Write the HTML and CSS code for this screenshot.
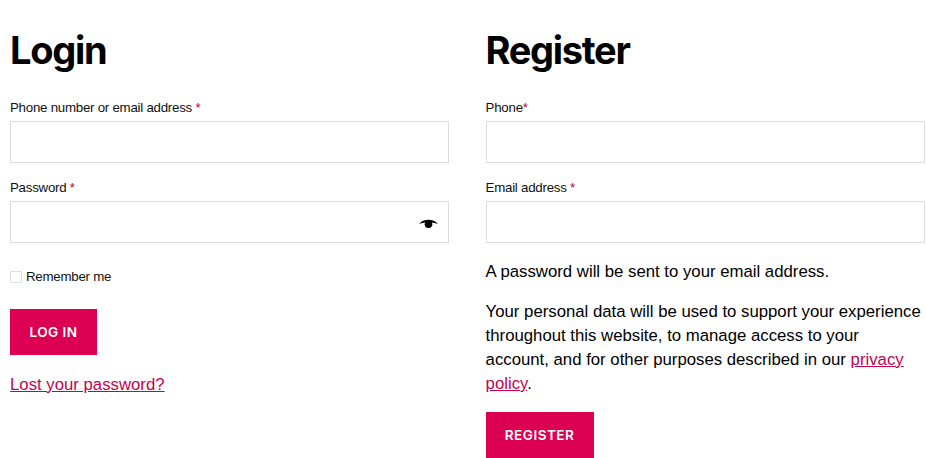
FILE: index.html
```html
<!DOCTYPE html>
<html lang="en">
<head>
<meta charset="utf-8">
<title>My account</title>
<link rel="stylesheet" href="styles.css">
</head>
<body>
<main class="columns">
  <section class="col">
    <h2 class="title">Login</h2>
    <form>
      <div class="field">
        <label class="label">Phone number or email address <span class="req">*</span></label>
        <input class="input" type="text">
      </div>
      <div class="field">
        <label class="label">Password <span class="req">*</span></label>
        <div class="pw">
          <input class="input" type="password">
          <svg class="eye" width="19" height="10" viewBox="0 0 19 10" aria-hidden="true">
            <path d="M0 5C2.500 2 5.800 .8 9.500 .8S16.500 2 19 5C16 3.900 12.500 3.300 9.500 3.300S3 3.900 0 5Z" fill="#000"/>
            <circle cx="9.500" cy="5.300" r="3.800" fill="#000"/>
          </svg>
        </div>
      </div>
      <label class="remember"><span class="check"></span><span>Remember me</span></label>
      <button class="btn login" type="button">Log in</button>
      <p class="lost"><a href="#">Lost your password?</a></p>
    </form>
  </section>
  <section class="col">
    <h2 class="title">Register</h2>
    <form>
      <div class="field">
        <label class="label">Phone<span class="req">*</span></label>
        <input class="input" type="text">
      </div>
      <div class="field">
        <label class="label">Email address <span class="req">*</span></label>
        <input class="input" type="email">
      </div>
      <p class="text first">A password will be sent to your email address.</p>
      <p class="text">Your personal data will be used to support your experience throughout this website, to manage access to your account, and for other purposes described in our <a href="#">privacy policy</a>.</p>
      <button class="btn register" type="button">Register</button>
    </form>
  </section>
</main>
</body>
</html>
```
FILE: styles.css
```css
* { box-sizing: border-box; }
html, body { margin: 0; height: 458px; overflow: hidden; background: #fff; }
body { font-family: "Liberation Sans", Arial, sans-serif; color: #000; }
.columns { display: grid; grid-template-columns: 439.400px 439.400px; column-gap: 36.200px; padding: 0 0 0 10px; }
.title { margin: 26px 0 0; height: 48px; font-family: Inter, sans-serif; font-weight: 700; font-size: 38px; line-height: 48px; letter-spacing: -1.300px; }
form { margin-top: 24px; }
.field { margin-bottom: 15px; }
.label { display: block; font-size: 13.300px; letter-spacing: -0.250px; line-height: 19px; margin-bottom: 4px; color: #111; }
.req { color: #b0003a; }
.input { display: block; width: 100%; height: 42px; border: 1px solid #ddd; background: #fff; padding: 0 10px; outline: none; }
.pw { position: relative; }
.eye { position: absolute; right: 11px; top: 18px; }
.remember { display: flex; align-items: center; gap: 4px; margin-top: 26px; font-size: 13.300px; letter-spacing: -0.250px; line-height: 16px; color: #111; }
.check { width: 12px; height: 12px; border: 1px solid #ddd; background: #fff; border-radius: 1px; }
.btn { display: block; border: 0; height: 46px; background: #db0052; color: #fff; font-family: Inter, sans-serif; font-weight: 600; font-size: 13.600px; letter-spacing: 0.450px; text-transform: uppercase; padding: 0; }
.login { width: 87px; margin-top: 24px; }
.register { width: 108px; margin-top: 16px; }
.lost { margin: 18px 0 0; font-size: 16.750px; line-height: 24px; }
a { color: #c6004c; }
.text { margin: 0 0 16px; font-size: 16.750px; line-height: 24px; }
.text.first { margin-top: 17px; }
```
